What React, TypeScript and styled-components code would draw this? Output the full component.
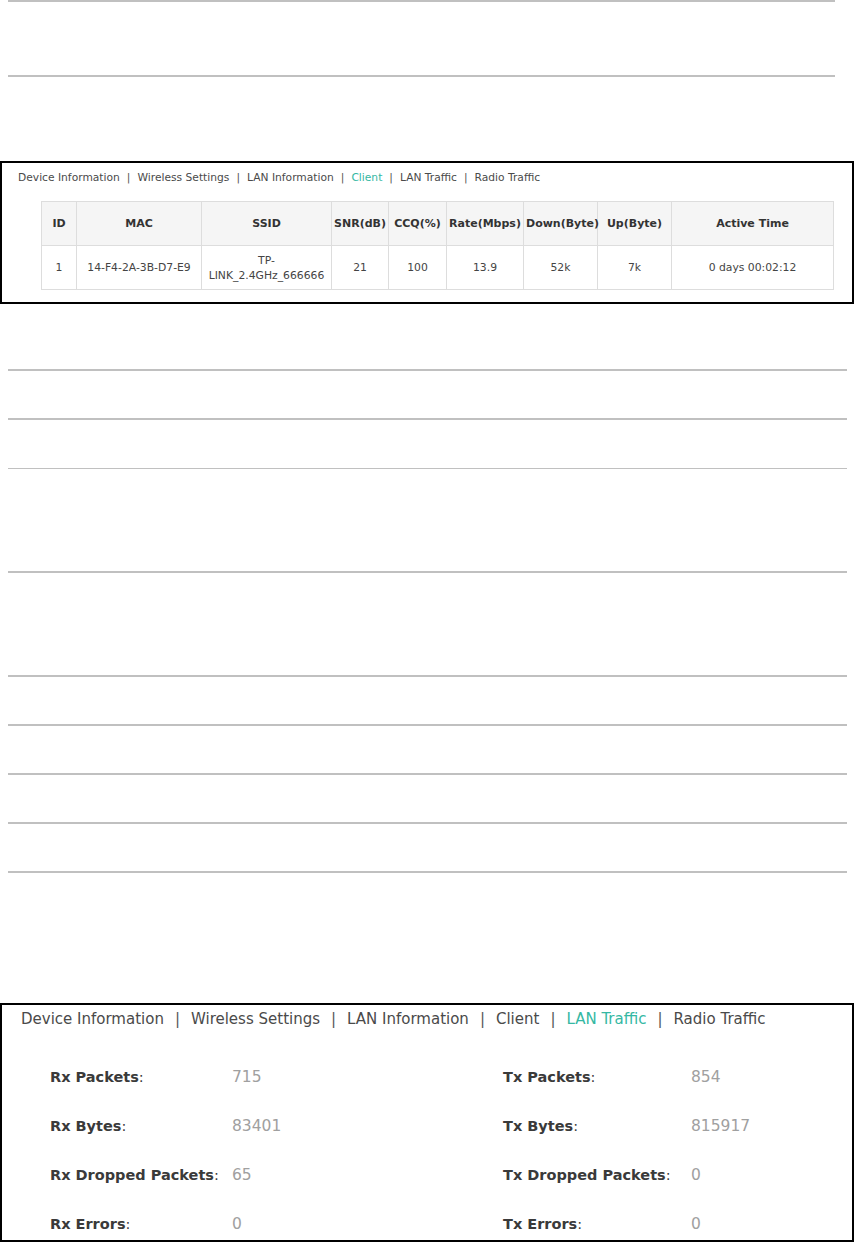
import React from 'react';
import styled, { createGlobalStyle } from 'styled-components';

const GlobalStyle = createGlobalStyle`
    html, body {
        margin: 0;
        padding: 0;
        background: #ffffff;
    }
    body {
        font-family: "DejaVu Sans", Verdana, sans-serif;
        color: #333333;
    }
`;

const Page = styled.div`
    width: 854px;
    display: flex;
    flex-direction: column;
`;

const Rule = styled.div<{ $top: number; $wide?: boolean; $thin?: boolean }>`
    margin-top: ${props => props.$top}px;
    margin-left: 8px;
    width: ${props => props.$wide ? 839 : 827}px;
    height: ${props => props.$thin ? 1 : 2}px;
    background: #c0c0c0;
`;

const Panel = styled.div<{ $top: number }>`
    margin-top: ${props => props.$top}px;
    width: 854px;
    box-sizing: border-box;
    border: 2px solid #000000;
    background: #ffffff;
`;

const ClientPanel = styled(Panel)`
    padding: 6px 0 12px;
`;

const TrafficPanel = styled(Panel)`
    height: 239px;
    padding: 4px 0 0;
`;

const Tabs = styled.div<{ $size: number; $indent: number }>`
    display: flex;
    align-items: center;
    padding-left: ${props => props.$indent}px;
    font-size: ${props => props.$size}px;
    line-height: ${props => Math.round(props.$size) + 6}px;
    color: #4a4a4a;
    white-space: nowrap;
`;

const Tab = styled.span<{ $active?: boolean }>`
    color: ${props => props.$active ? '#35b8a3' : '#4a4a4a'};
`;

const Sep = styled.span<{ $gap: number }>`
    margin: 0 ${props => props.$gap}px;
    color: #555555;
`;

const ClientTable = styled.table`
    margin: 15px 0 0 39px;
    width: 792px;
    table-layout: fixed;
    border-collapse: collapse;
    font-size: 10.8px;
    color: #444444;
`;

const HeadCell = styled.th`
    height: 43px;
    padding: 0 2px;
    border: 1px solid #dddddd;
    background: #f5f5f5;
    font-size: 11px;
    font-weight: bold;
    color: #333333;
    text-align: center;
    white-space: nowrap;
`;

const Cell = styled.td`
    height: 43px;
    padding: 0 3px;
    border: 1px solid #dddddd;
    text-align: center;
    line-height: 15px;
`;

const StatGrid = styled.div`
    display: grid;
    grid-template-columns: 182px 271px 188px 1fr;
    row-gap: 25px;
    margin-top: 35px;
    padding-left: 48px;
`;

const Label = styled.div`
    height: 24px;
    line-height: 24px;
    font-size: 14.5px;
    font-weight: bold;
    color: #3a3a3a;
    white-space: nowrap;
`;

const Colon = styled.span`
    font-weight: normal;
`;

const Value = styled.div`
    height: 24px;
    line-height: 24px;
    font-size: 15.5px;
    color: #a0a0a0;
`;

const tabNames = ['Device Information', 'Wireless Settings', 'LAN Information', 'Client', 'LAN Traffic', 'Radio Traffic'];

const columns = [
    { title: 'ID', width: 35 },
    { title: 'MAC', width: 125 },
    { title: 'SSID', width: 130 },
    { title: 'SNR(dB)', width: 57 },
    { title: 'CCQ(%)', width: 58 },
    { title: 'Rate(Mbps)', width: 77 },
    { title: 'Down(Byte)', width: 74 },
    { title: 'Up(Byte)', width: 74 },
    { title: 'Active Time', width: 162 },
];

const clientRow = ['1', '14-F4-2A-3B-D7-E9', 'TP-LINK_2.4GHz_666666', '21', '100', '13.9', '52k', '7k', '0 days 00:02:12'];

const stats = [
    ['Rx Packets', '715', 'Tx Packets', '854'],
    ['Rx Bytes', '83401', 'Tx Bytes', '815917'],
    ['Rx Dropped Packets', '65', 'Tx Dropped Packets', '0'],
    ['Rx Errors', '0', 'Tx Errors', '0'],
];

const TabBar: React.FC<{ active: string; size: number; indent: number; gap: number }> = ({ active, size, indent, gap }) => (
    <Tabs $size={size} $indent={indent}>
        {tabNames.map((name, i) => (
            <React.Fragment key={name}>
                {i > 0 && <Sep $gap={gap}>|</Sep>}
                <Tab $active={name === active}>{name}</Tab>
            </React.Fragment>
        ))}
    </Tabs>
);

export default function App() {
    return (
        <>
            <GlobalStyle />
            <Page>
                <Rule $top={0} />
                <Rule $top={73} />

                <ClientPanel $top={84}>
                    <TabBar active="Client" size={10.7} indent={16} gap={7} />
                    <ClientTable>
                        <colgroup>
                            {columns.map(c => <col key={c.title} style={{ width: c.width }} />)}
                        </colgroup>
                        <thead>
                            <tr>
                                {columns.map(c => <HeadCell key={c.title}>{c.title}</HeadCell>)}
                            </tr>
                        </thead>
                        <tbody>
                            <tr>
                                {clientRow.map((v, i) => <Cell key={i}>{v}</Cell>)}
                            </tr>
                        </tbody>
                    </ClientTable>
                </ClientPanel>

                <Rule $top={65} $wide />
                <Rule $top={47} $wide />
                <Rule $top={48} $wide $thin />
                <Rule $top={102} $wide />
                <Rule $top={102} $wide />
                <Rule $top={47} $wide />
                <Rule $top={47} $wide />
                <Rule $top={47} $wide />
                <Rule $top={47} $wide />

                <TrafficPanel $top={130}>
                    <TabBar active="LAN Traffic" size={15} indent={19} gap={11} />
                    <StatGrid>
                        {stats.map(([l1, v1, l2, v2]) => (
                            <React.Fragment key={l1}>
                                <Label>{l1}<Colon>:</Colon></Label>
                                <Value>{v1}</Value>
                                <Label>{l2}<Colon>:</Colon></Label>
                                <Value>{v2}</Value>
                            </React.Fragment>
                        ))}
                    </StatGrid>
                </TrafficPanel>
            </Page>
        </>
    );
}
